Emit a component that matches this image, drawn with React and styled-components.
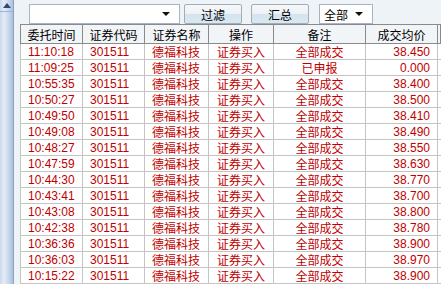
import styled, { createGlobalStyle } from "styled-components";

const GlobalStyle = createGlobalStyle`
  html, body {
    margin: 0;
    padding: 0;
    height: 100%;
    overflow: hidden;
  }
  body {
    font-family: "Liberation Sans", "Noto Sans CJK SC", sans-serif;
    font-size: 12px;
    background: #eef3f7;
  }
`;

const Frame = styled.div`
  display: flex;
  width: 441px;
  height: 284px;
  overflow: hidden;
`;

const ScrollBar = styled.div`
  width: 13px;
  flex: none;
  border-right: 1px solid #8ea2bd;
  background: linear-gradient(to right, #c9d8ec 0%, #e4ecf7 30%, #c4d5ec 70%, #a9bfdd 100%);
  display: flex;
  flex-direction: column;
`;

const ScrollArrow = styled.div`
  height: 11px;
  display: flex;
  align-items: center;
  justify-content: center;
  border-bottom: 1px solid #9fb3cf;
`;

const Main = styled.div`
  flex: 1;
  padding-left: 6px;
  display: flex;
  flex-direction: column;
  background: #eef3f7;
  min-width: 0;
`;

const Toolbar = styled.div`
  height: 31px;
  display: flex;
  align-items: flex-start;
  padding: 4px 0 0 9px;
  box-sizing: border-box;
`;

const Combo = styled.div`
  width: ${(p) => p.$width}px;
  height: 20px;
  box-sizing: border-box;
  background: #fff;
  border: 1px solid #a6b4c6;
  display: flex;
  align-items: center;
  justify-content: ${(p) => (p.$text ? "space-between" : "flex-end")};
  padding: 0 9px 0 4px;
  margin-right: ${(p) => p.$gap}px;
  color: #000;
`;

const Arrow = styled.span`
  width: 0;
  height: 0;
  border-left: 4px solid transparent;
  border-right: 4px solid transparent;
  border-top: 4px solid #111;
`;

const Button = styled.div`
  width: 58px;
  height: 20px;
  box-sizing: border-box;
  border: 1px solid #a3adb8;
  border-radius: 2px;
  background: linear-gradient(to bottom, #f6f8fa 0%, #eef2f5 48%, #d4e5ef 52%, #d9e8f1 100%);
  display: flex;
  align-items: center;
  justify-content: center;
  margin-right: ${(p) => p.$gap}px;
  color: #000;
`;

const Grid = styled.div`
  display: grid;
  grid-template-columns: 62px 62px 64px 65px 92px 72px 1fr;
  border-left: 1px solid ${(p) => (p.$head ? "#8a8a8a" : "#c4c4c4")};
`;

const HeadCell = styled.div`
  height: 20px;
  box-sizing: border-box;
  border-top: 1px solid #8a8a8a;
  border-bottom: 1px solid #8a8a8a;
  border-right: 1px solid #8a8a8a;
  background: #f2f5f8;
  display: flex;
  align-items: center;
  justify-content: center;
  color: #000;
`;

const Body = styled.div`
  background: #fff;
  flex: 1;
`;

const Cell = styled.div`
  height: 16px;
  box-sizing: border-box;
  border-right: 1px solid #c4c4c4;
  border-bottom: 1px solid #c4c4c4;
  display: flex;
  align-items: center;
  justify-content: ${(p) => p.$align || "flex-start"};
  padding: 0 7px;
  color: #c00000;
  white-space: nowrap;
  overflow: hidden;
`;

const rows = [
  ["11:10:18", "全部成交", "38.450"],
  ["11:09:25", "已申报", "0.000"],
  ["10:55:35", "全部成交", "38.400"],
  ["10:50:27", "全部成交", "38.500"],
  ["10:49:50", "全部成交", "38.410"],
  ["10:49:08", "全部成交", "38.490"],
  ["10:48:27", "全部成交", "38.550"],
  ["10:47:59", "全部成交", "38.630"],
  ["10:44:30", "全部成交", "38.770"],
  ["10:43:41", "全部成交", "38.700"],
  ["10:43:08", "全部成交", "38.800"],
  ["10:42:38", "全部成交", "38.780"],
  ["10:36:36", "全部成交", "38.900"],
  ["10:36:03", "全部成交", "38.970"],
  ["10:15:22", "全部成交", "38.900"],
];

const headers = ["委托时间", "证券代码", "证券名称", "操作", "备注", "成交均价", ""];

export default function App() {
  return (
    <>
      <GlobalStyle />
      <Frame>
        <ScrollBar>
          <ScrollArrow>
            <svg width="8" height="5" viewBox="0 0 8 5">
              <path d="M0 5 L4 0 L8 5 Z" fill="#2c4a7c" />
            </svg>
          </ScrollArrow>
        </ScrollBar>
        <Main>
          <Toolbar>
            <Combo $width={151} $gap={4}>
              <Arrow />
            </Combo>
            <Button $gap={9}>过滤</Button>
            <Button $gap={10}>汇总</Button>
            <Combo $width={54} $text $gap={0}>
              <span>全部</span>
              <Arrow />
            </Combo>
          </Toolbar>
          <Grid $head>
            {headers.map((h, i) => (
              <HeadCell key={i}>{h}</HeadCell>
            ))}
          </Grid>
          <Body>
            {rows.map(([time, note, price]) => (
              <Grid key={time}>
                <Cell>{time}</Cell>
                <Cell>301511</Cell>
                <Cell>德福科技</Cell>
                <Cell $align="center">证券买入</Cell>
                <Cell $align="center">{note}</Cell>
                <Cell $align="flex-end">{price}</Cell>
                <Cell />
              </Grid>
            ))}
          </Body>
        </Main>
      </Frame>
    </>
  );
}
